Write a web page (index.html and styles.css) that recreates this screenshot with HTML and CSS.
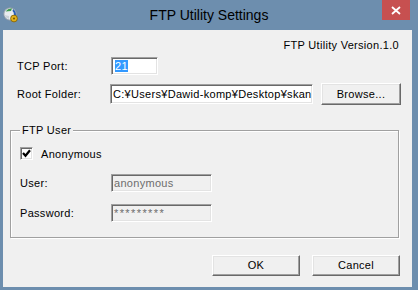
FILE: index.html
```html
<!DOCTYPE html>
<html>
	<head>
		<title>FTP Utility Settings</title>
		<meta name="viewport" content="width=device-width, initial-scale=1" />
		<link rel="stylesheet" href="styles.css">
	</head>
	<body>
		<div class="window">
			<header class="titlebar">
				<svg class="app-icon" width="16" height="16" viewBox="0 0 16 16">
					<circle cx="7" cy="7" r="6.2" fill="#e8ecef" stroke="#8a97a3" stroke-width="1"/>
					<path d="M2.5 4.5 Q5 1 9 1.5 L8 4 Q5 4 2.5 4.5 Z" fill="#3f9c4e"/>
					<path d="M10 2 Q13 4 13 8 L11 8 Q11 5 9.5 4 Z" fill="#2a5fb8"/>
					<path d="M1 8 Q3 11 6 12 L6 9 Z" fill="#c9d1d8"/>
					<circle cx="11" cy="11.5" r="3.4" fill="#e3b21a" stroke="#7a5a05" stroke-width="0.8"/>
					<circle cx="11" cy="11.5" r="1.1" fill="#7a5a05"/>
				</svg>
				<h1>FTP Utility Settings</h1>
				<div class="close">
					<svg width="10" height="9" viewBox="0 0 10 9">
						<path d="M1 1 L9 8 M9 1 L1 8" stroke="#fff" stroke-width="1.8" fill="none"/>
					</svg>
				</div>
			</header>
			<main class="client">
				<div class="version">FTP Utility Version.1.0</div>
				<div class="row port-row">
					<span class="label">TCP Port:</span>
					<div class="field port"><span class="selected">21</span></div>
				</div>
				<div class="row folder-row">
					<span class="label">Root Folder:</span>
					<div class="field folder">C:¥Users¥Dawid-komp¥Desktop¥skan</div>
					<div class="button browse">Browse...</div>
				</div>
				<fieldset class="group">
					<legend>FTP User</legend>
					<div class="check-row">
						<span class="checkbox">
							<svg width="9" height="9" viewBox="0 0 9 9">
								<path d="M1 4 L3.5 6.8 L8 1.2" stroke="#000" stroke-width="2.2" fill="none"/>
							</svg>
						</span>
						<span>Anonymous</span>
					</div>
					<div class="row user-row">
						<span class="label">User:</span>
						<div class="field disabled">anonymous</div>
					</div>
					<div class="row pass-row">
						<span class="label">Password:</span>
						<div class="field disabled secret">*********</div>
					</div>
				</fieldset>
				<div class="actions">
					<div class="button default">OK</div>
					<div class="button">Cancel</div>
				</div>
			</main>
		</div>
	</body>
</html>
```
FILE: styles.css
```css
body {
	margin: 0;
	font-family: "Liberation Sans", Arial, sans-serif;
	font-size: 11px;
	letter-spacing: 0.3px;
	color: #000;
}
.window {
	width: 418px;
	height: 290px;
	background: #6d8eae;
	display: flex;
	flex-flow: column;
}
.titlebar {
	height: 30px;
	display: flex;
	align-items: flex-start;
	position: relative;
}
.app-icon { margin: 7px 0 0 3px; }
.titlebar h1 {
	margin: 0;
	position: absolute;
	left: 0;
	right: 0;
	top: 7px;
	text-align: center;
	font-size: 14px;
	font-weight: normal;
	letter-spacing: 0;
	line-height: 17px;
}
.close {
	margin-left: auto;
	margin-right: 8px;
	width: 28px;
	height: 20px;
	background: #c75050;
	display: flex;
	align-items: center;
	justify-content: center;
	position: relative;
}
.client {
	flex: 1;
	margin: 0 6px 3px 3px;
	background: #f0f0f0;
	display: flex;
	flex-flow: column;
}
.version {
	margin: 9px 13px 0 0;
	text-align: right;
	line-height: 13px;
}
.row {
	display: flex;
	align-items: center;
}
.label { flex: none; }
.port-row { margin-top: 5px; padding-left: 14px; }
.port-row .label { width: 94px; }
.folder-row { margin-top: 8px; padding-left: 14px; }
.folder-row .label { width: 93px; }
.field {
	box-sizing: border-box;
	height: 18px;
	background: #fff;
	border: 1px solid;
	border-color: #a0a0a0 #fff #fff #a0a0a0;
	box-shadow: inset 1px 1px #696969, inset -1px -1px #e3e3e3;
	padding: 0 2px;
	line-height: 16px;
	white-space: nowrap;
	overflow: hidden;
}
.port { width: 47px; padding-left: 3px; }
.selected { background: #3399ff; color: #fff; }
.folder { width: 203px; height: 20px; line-height: 18px; }
.button {
	box-sizing: border-box;
	height: 22px;
	background: #f0f0f0;
	border: 1px solid;
	border-color: #fff #696969 #696969 #fff;
	box-shadow: inset -1px -1px #a0a0a0, inset 1px 1px #e3e3e3;
	text-align: center;
	line-height: 20px;
}
.browse { width: 80px; margin-left: 8px; }
.group {
	margin: 19px 0 0 7px;
	width: 389px;
	box-sizing: border-box;
	min-width: 0;
	border: 1px solid #a0a0a0;
	box-shadow: inset 1px 1px #fff, 1px 1px #fff;
	padding: 0 9px 15px 9px;
}
.group legend {
	padding: 0 2px;
	line-height: 13px;
	background: #f0f0f0;
}
.check-row {
	margin-top: 10px;
	display: flex;
	align-items: center;
	height: 13px;
}
.checkbox {
	box-sizing: border-box;
	width: 13px;
	height: 13px;
	margin-right: 8px;
	background: #fff;
	border: 1px solid;
	border-color: #a0a0a0 #fff #fff #a0a0a0;
	box-shadow: inset 1px 1px #696969, inset -1px -1px #e3e3e3;
	display: flex;
	align-items: center;
	justify-content: center;
}
.user-row { margin-top: 14px; }
.pass-row { margin-top: 12px; }
.user-row .label, .pass-row .label { width: 91px; }
.field.disabled {
	width: 101px;
	background: #f0f0f0;
	color: #6d6d6d;
}
.secret { letter-spacing: 1.4px; }
.actions {
	margin-top: 17px;
	padding-right: 12px;
	display: flex;
	justify-content: flex-end;
	gap: 12px;
}
.actions .button { width: 88px; height: 21px; line-height: 19px; }
```
